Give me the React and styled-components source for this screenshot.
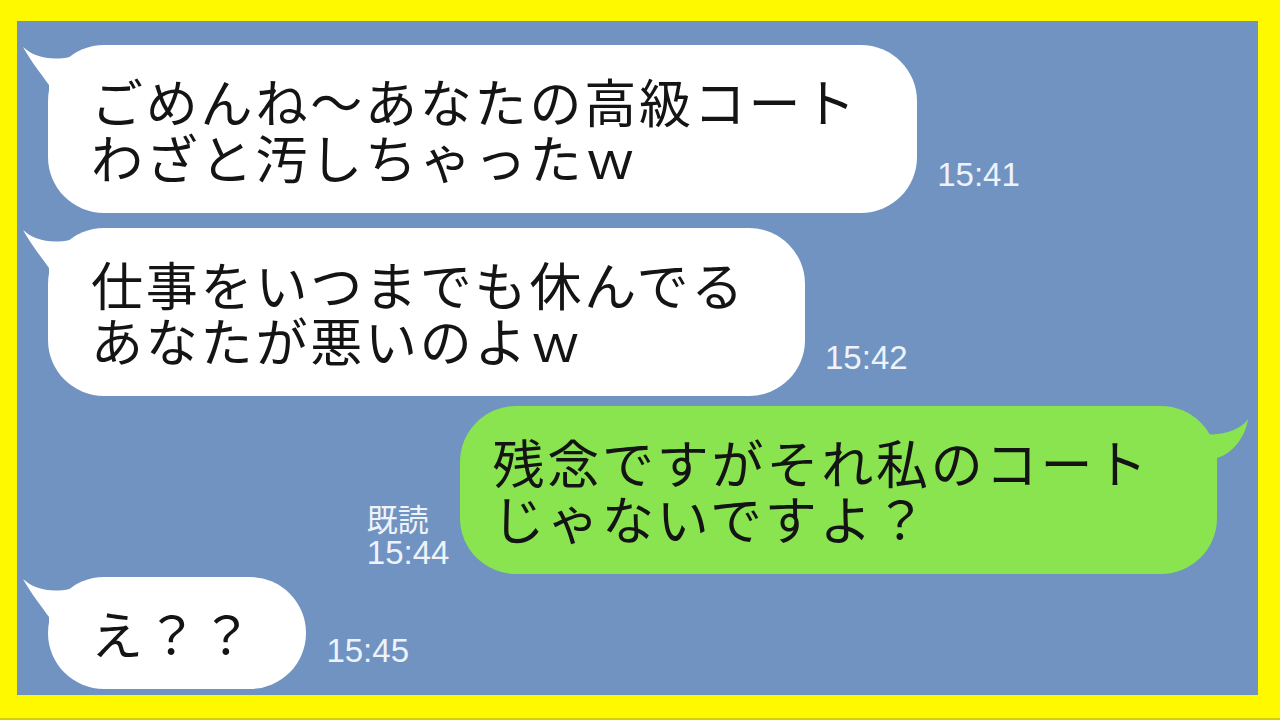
import styled, { createGlobalStyle } from "styled-components";

const GlobalStyle = createGlobalStyle`
  html, body {
    margin: 0;
    padding: 0;
    background: #fff900;
    overflow: hidden;
  }
`;

const messages = [
  {
    id: "1",
    mine: false,
    lines: ["ごめんね～あなたの高級コート", "わざと汚しちゃったｗ"],
    time: "15:41",
    gap: 0,
  },
  {
    id: "2",
    mine: false,
    lines: ["仕事をいつまでも休んでる", "あなたが悪いのよｗ"],
    time: "15:42",
    gap: 15,
  },
  {
    id: "3",
    mine: true,
    lines: ["残念ですがそれ私のコート", "じゃないですよ？"],
    time: "15:44",
    gap: 10,
  },
  {
    id: "4",
    mine: false,
    lines: ["え？？"],
    time: "15:45",
    gap: 3,
    padRight: 51,
  },
];

/* frame + chat background */

const Frame = styled.div`
  width: 1280px;
  height: 720px;
  box-sizing: border-box;
  padding: 21px 22px 23px 17px;
  background: #fff900;
  border-bottom: 2px solid #d6cf00;
`;

const ChatArea = styled.main`
  height: 100%;
  box-sizing: border-box;
  background: #7193c1;
  display: flex;
  flex-direction: column;
  padding: 24px 41px 0 31px;
`;

const Row = styled.div`
  display: flex;
  align-items: flex-end;
  justify-content: ${(p) => (p.$mine ? "flex-end" : "flex-start")};
  gap: ${(p) => (p.$mine ? "11px" : "20px")};
  margin-top: ${(p) => p.$gap}px;
`;

const Bubble = styled.div`
  position: relative;
  background: ${(p) => (p.$mine ? "#89e44f" : "#ffffff")};
  border-radius: 56px;
  padding: ${(p) =>
    p.$mine ? "28px 67px 28px 32px" : `28px ${p.$padRight}px 28px 43px`};
  font-family: "Noto Sans CJK JP", "Noto Sans", sans-serif;
  font-size: 52px;
  line-height: 56px;
  letter-spacing: 2.8px;
  color: #141414;
  white-space: nowrap;
`;

const Tail = styled.svg`
  position: absolute;
  width: 50px;
  height: 52px;
  ${(p) => (p.$mine ? "right: -34px; top: 8px;" : "left: -26px; top: 0;")}
  & path {
    fill: ${(p) => (p.$mine ? "#89e44f" : "#ffffff")};
  }
`;

const Time = styled.span`
  font-family: "Liberation Sans", Arial, sans-serif;
  font-size: 33px;
  line-height: 33px;
  color: #eef3fb;
  margin-bottom: 22px;
`;

const ReadInfo = styled.div`
  display: flex;
  flex-direction: column;
  margin-bottom: 4px;
  color: #eef3fb;
  & .read {
    font-family: "Noto Sans CJK JP", sans-serif;
    font-size: 31px;
    line-height: 35px;
  }
  & .time {
    font-family: "Liberation Sans", Arial, sans-serif;
    font-size: 33px;
    line-height: 35px;
  }
`;

const BubbleTail = ({ mine }) => (
  <Tail $mine={mine} viewBox="0 0 50 52">
    {mine ? (
      <path d="M47 5 C 40 16, 20 22, 6 20 L 0 20 L 0 50 L 16 50 L 16 44 C 30 40, 44 25, 47 5 Z" />
    ) : (
      <path d="M1 2 C 12 12, 28 16, 48 12 L 48 48 L 27 48 L 27 40 C 20 30, 10 18, 1 2 Z" />
    )}
  </Tail>
);

export default function App() {
  return (
    <>
      <GlobalStyle />
      <Frame>
        <ChatArea>
          {messages.map((m) => (
            <Row key={m.id} $mine={m.mine} $gap={m.gap}>
              {m.mine && (
                <ReadInfo>
                  <span className="read">既読</span>
                  <span className="time">{m.time}</span>
                </ReadInfo>
              )}
              <Bubble $mine={m.mine} $padRight={m.padRight || 59}>
                <BubbleTail mine={m.mine} />
                {m.lines.map((line) => (
                  <div key={line}>{line}</div>
                ))}
              </Bubble>
              {!m.mine && <Time>{m.time}</Time>}
            </Row>
          ))}
        </ChatArea>
      </Frame>
    </>
  );
}
